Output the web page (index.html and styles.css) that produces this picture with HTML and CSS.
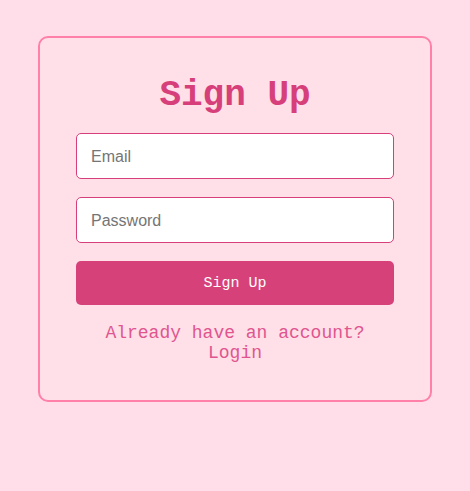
FILE: index.html
```html
<!DOCTYPE html>
<html lang="en">
<head>
<meta charset="utf-8">
<title>Sign Up</title>
<link rel="stylesheet" href="styles.css">
</head>
<body>
  <main class="page">
    <form class="card">
      <h1 class="title">Sign Up</h1>
      <input class="field" type="email" placeholder="Email">
      <input class="field" type="password" placeholder="Password">
      <button class="btn" type="button">Sign Up</button>
      <p class="switch">Already have an account? Login</p>
    </form>
  </main>
</body>
</html>
```
FILE: styles.css
```css
html, body {
  margin: 0;
  padding: 0;
}
body {
  background: #ffdeea;
  font-family: "Courier New", "Nimbus Mono PS", "FreeMono", "Liberation Mono", monospace;
}
.page {
  display: flex;
  justify-content: center;
  padding-top: 36px;
}
.card {
  box-sizing: border-box;
  width: 394px;
  background: #ffe0e8;
  border: 2px solid #ff80a8;
  border-radius: 10px;
  padding: 37px 36px 37px;
  display: flex;
  flex-direction: column;
}
.title {
  margin: 0 0 16px;
  text-align: center;
  color: #d63f7a;
  font-size: 36px;
  line-height: 42px;
  font-weight: bold;
}
.field {
  box-sizing: border-box;
  height: 46px;
  margin: 0 0 18px;
  padding: 1px 14px 0;
  border: 1px solid #d63f7a;
  border-radius: 5px;
  background: #fff;
  font-family: "Liberation Sans", Arial, sans-serif;
  font-size: 16px;
  color: #333;
  outline: none;
}
.field::placeholder {
  color: #757575;
}
.btn {
  height: 44px;
  border: none;
  border-radius: 5px;
  background: #d6417a;
  color: #fff;
  font-family: inherit;
  font-size: 15px;
  padding: 0;
}
.switch {
  margin: 18px 20px 0;
  text-align: center;
  color: #e0558f;
  font-size: 18px;
  line-height: 20px;
}
```
